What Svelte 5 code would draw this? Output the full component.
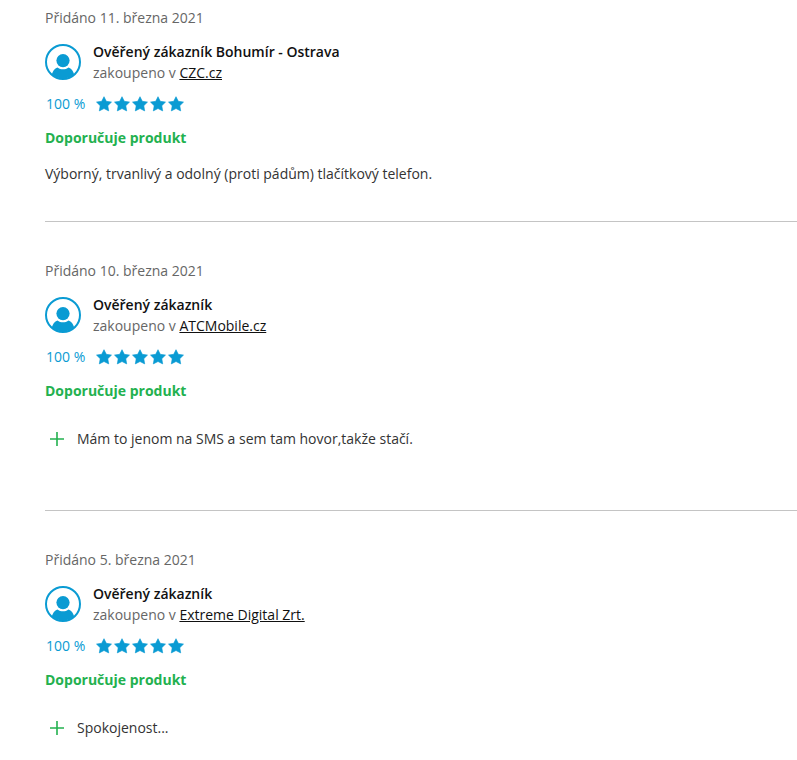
<script>
  const reviews = [
    {
      date: "11. března 2021",
      author: "Ověřený zákazník Bohumír - Ostrava",
      shop: "CZC.cz",
      rating: 100,
      text: "Výborný, trvanlivý a odolný (proti pádům) tlačítkový telefon.",
      pros: [],
    },
    {
      date: "10. března 2021",
      author: "Ověřený zákazník",
      shop: "ATCMobile.cz",
      rating: 100,
      text: "",
      pros: ["Mám to jenom na SMS a sem tam hovor,takže stačí."],
    },
    {
      date: "5. března 2021",
      author: "Ověřený zákazník",
      shop: "Extreme Digital Zrt.",
      rating: 100,
      text: "",
      pros: ["Spokojenost..."],
    },
  ];
  const stars = [1, 2, 3, 4, 5];
</script>

<main class="reviews">
  {#each reviews as review}
    <article class="review">
      <p class="date">Přidáno {review.date}</p>
      <header class="author">
        <svg class="avatar" viewBox="0 0 36 36" aria-hidden="true">
          <circle cx="18" cy="18" r="17" fill="#fff" stroke="#0a9bd3" stroke-width="2" />
          <circle cx="18" cy="16.6" r="6.6" fill="#0a9bd3" />
          <path
            d="M6.8 30.6C7.6 27 9.8 24.2 12.4 23.4C15.6 26 20.4 26 23.6 23.4C26.2 24.2 28.4 27 29.2 30.6C22.8 36 13.2 36 6.8 30.6Z"
            fill="#0a9bd3" />
        </svg>
        <div>
          <h3 class="name">{review.author}</h3>
          <p class="shop">zakoupeno v <a href="#shop">{review.shop}</a></p>
        </div>
      </header>
      <div class="rating">
        <span>{review.rating} %</span>
        <div class="stars">
          {#each stars as star}
            <svg class="star" viewBox="0 0 16 16" aria-hidden="true">
              <path
                d="M8 .7L10.3 5.3L15.5 6.1L11.8 9.7L12.7 14.9L8 12.5L3.3 14.9L4.2 9.7L.5 6.1L5.7 5.3Z"
                fill="#0a9bd3" stroke="#0a9bd3" stroke-width=".6" stroke-linejoin="round" />
            </svg>
          {/each}
        </div>
      </div>
      <p class="recommend">Doporučuje produkt</p>
      {#if review.text}
        <p class="text">{review.text}</p>
      {/if}
      {#if review.pros.length}
        <ul class="pros">
          {#each review.pros as pro}
            <li>
              <svg class="plus" viewBox="0 0 14 14" aria-hidden="true">
                <path d="M7 0V14M0 7H14" stroke="#23b14f" stroke-width="1.6" />
              </svg>
              <span>{pro}</span>
            </li>
          {/each}
        </ul>
      {/if}
    </article>
  {/each}
</main>

<style>
  :global(body) {
    background: #fff;
  }
  .reviews {
    padding: 7px 0 0 45px;
    font-family: "Source Sans Pro", "Open Sans", "Noto Sans", sans-serif;
    font-size: 14px;
    line-height: 21px;
    color: #333;
  }
  .review {
    padding-bottom: 37px;
    margin-bottom: 38px;
    border-bottom: 1px solid #c4c4c4;
  }
  .review:last-child {
    margin-bottom: 0;
    padding-bottom: 0;
    border-bottom: 0;
  }
  p,
  h3,
  ul {
    margin: 0;
    padding: 0;
  }
  .date,
  .shop {
    color: #666;
  }
  .author {
    display: flex;
    align-items: center;
    gap: 12px;
    margin-top: 13px;
  }
  .avatar {
    width: 36px;
    height: 36px;
  }
  .name {
    font-size: 14px;
    font-weight: 600;
    color: #111;
  }
  .shop a {
    color: #111;
    text-decoration: underline;
  }
  .rating {
    display: flex;
    align-items: center;
    gap: 11px;
    margin-top: 10px;
    padding-left: 1px;
    font-weight: 500;
    color: #0a9bd3;
  }
  .stars {
    display: flex;
    gap: 2px;
  }
  .star {
    width: 16px;
    height: 16px;
  }
  .recommend {
    margin-top: 13px;
    font-weight: 700;
    color: #23b14f;
  }
  .text {
    margin-top: 15px;
  }
  .pros {
    list-style: none;
    padding: 27px 0 24px 5px;
  }
  .pros li {
    display: flex;
    align-items: center;
    gap: 13px;
  }
  .plus {
    width: 14px;
    height: 14px;
  }
</style>
